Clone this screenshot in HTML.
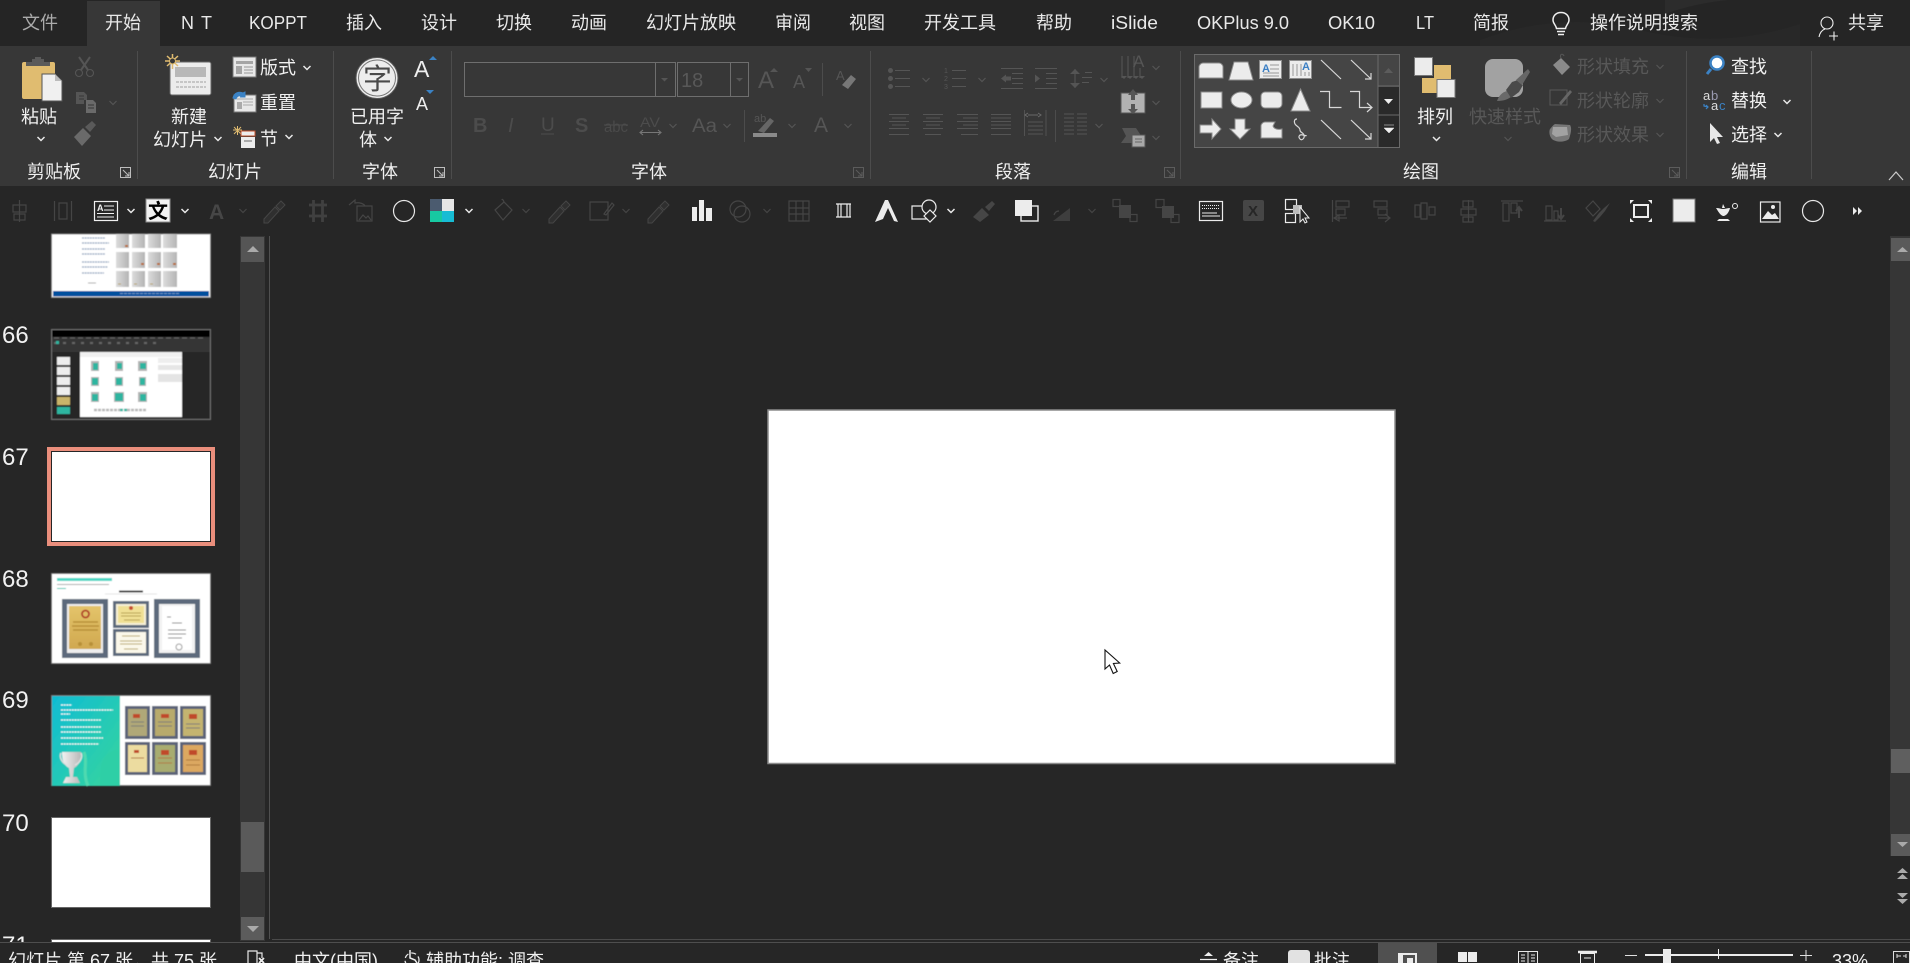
<!DOCTYPE html>
<html><head><meta charset="utf-8"><title>PowerPoint</title>
<style>
html,body{margin:0;padding:0;background:#262626;width:1910px;height:963px;overflow:hidden}
svg{display:block;position:absolute;left:0;top:0}
text{font-family:"Liberation Sans","Noto Sans CJK SC",sans-serif;font-size:18px;fill:#f0f0f0}
.t{fill:#e9e9e9}
.d{fill:#585858}
.w{fill:none;stroke:#f0f0f0;stroke-width:1.5}
.g{fill:none;stroke:#555;stroke-width:1.1}
.gf{fill:#555}
.q{fill:none;stroke:#454545;stroke-width:1.2}
.sep{stroke:#4c4c4c;stroke-width:1}
.cw{fill:none;stroke:#e8e8e8;stroke-width:1.5}
.cd{fill:none;stroke:#555;stroke-width:1.2}
.lau{fill:none;stroke:#bdbdbd;stroke-width:1}
.laud{fill:none;stroke:#5c5c5c;stroke-width:1}
.s{fill:#ececec;stroke:#8c8c8c;stroke-width:1}
.l{fill:none;stroke:#d8d8d8;stroke-width:1.2}
</style></head><body>
<svg width="1910" height="963" viewBox="0 0 1910 963" xmlns="http://www.w3.org/2000/svg">
<defs>
<path id="c" d="M-3.5-2L0 1.5 3.5-2"/>
<filter id="b"><feGaussianBlur stdDeviation="0.5"/></filter>
<linearGradient id="tg" x1="0" y1="0" x2="1" y2="1"><stop offset="0" stop-color="#0fbcd4"/><stop offset="1" stop-color="#38d69c"/></linearGradient>
<linearGradient id="cg" x1="0" y1="0" x2="1" y2="0"><stop offset="0" stop-color="#dcdcdc"/><stop offset="1" stop-color="#b4b4b4"/></linearGradient>
<linearGradient id="gd" x1="0" y1="0" x2="0" y2="1"><stop offset="0" stop-color="#e4c46a"/><stop offset="1" stop-color="#d0a850"/></linearGradient>
<linearGradient id="tr" x1="0" y1="0" x2="1" y2="0"><stop offset="0" stop-color="#f2f2f2"/><stop offset="1" stop-color="#b8b8b8"/></linearGradient>
</defs>

<!-- backgrounds -->
<rect width="1910" height="963" fill="#262626"/>
<rect width="1910" height="46" fill="#252525"/>
<path d="M1665 14Q1720-6 1790 0L1665 0Z" fill="#2c2c2c"/>
<path d="M1480 40Q1560 10 1640 30T1800 24L1800 46 1480 46Z" fill="#282828"/>
<rect y="46" width="1910" height="140" fill="#373737"/>
<rect x="87" y="1" width="73" height="45" fill="#373737"/>

<!-- tabs -->
<text x="22" y="29" style="fill:#ababab">文件</text>
<text x="105" y="29" class="t">开始</text>
<text x="181" y="29" class="t" textLength="31" lengthAdjust="spacing">N T</text>
<text x="249" y="29" class="t" textLength="58" lengthAdjust="spacingAndGlyphs">KOPPT</text>
<text x="346" y="29" class="t">插入</text>
<text x="421" y="29" class="t">设计</text>
<text x="496" y="29" class="t">切换</text>
<text x="571" y="29" class="t">动画</text>
<text x="646" y="29" class="t">幻灯片放映</text>
<text x="775" y="29" class="t">审阅</text>
<text x="849" y="29" class="t">视图</text>
<text x="924" y="29" class="t">开发工具</text>
<text x="1036" y="29" class="t">帮助</text>
<text x="1111" y="29" class="t" textLength="47" lengthAdjust="spacingAndGlyphs">iSlide</text>
<text x="1197" y="29" class="t" textLength="92" lengthAdjust="spacingAndGlyphs">OKPlus 9.0</text>
<text x="1328" y="29" class="t" textLength="47" lengthAdjust="spacingAndGlyphs">OK10</text>
<text x="1416" y="29" class="t" textLength="18" lengthAdjust="spacingAndGlyphs">LT</text>
<text x="1473" y="29" class="t">简报</text>
<path d="M1561 13c-5.500 0-8 3.900-8 7.500 0 3.500 3 5 3.500 8.500h9c.5-3.500 3.500-5 3.500-8.500 0-3.600-2.500-7.500-8-7.500z M1557 32h8 M1558 35h6" class="w" transform="translate(0 -0.500)"/>
<text x="1590" y="29" class="t">操作说明搜索</text>
<circle cx="1827" cy="23" r="6" class="w" style="stroke-width:1.100"/>
<path d="M1819 37c1-5 3-7 6-8M1829 36h9M1834 31.500v9" class="w" style="stroke-width:1.100"/>
<text x="1848" y="29" class="t">共享</text>

<!-- ribbon separators -->
<g class="sep">
<path d="M137.500 51V179M333.500 51V179M451.500 51V179M870.500 51V179M1180.500 51V179M1686.500 51V179M1811.500 51V179"/>
<path d="M822.500 63V96M744.500 110V142M1055.500 110V142"/>
</g>

<!-- clipboard -->
<rect x="22" y="62" width="33" height="37" rx="2" fill="#e0bc70"/>
<path d="M32 62v-3h3v-2h6v2h3v3h6v4H26v-4z" fill="#5a5a5a"/>
<path d="M42 74h13l7 7v20H42z" fill="#f0f0f0" stroke="#555"/>
<path d="M55 74v7h7" fill="#bbb"/>
<text x="21" y="123">粘贴</text>
<use href="#c" x="41" y="139" class="cw"/>
<g class="g"><circle cx="79" cy="73" r="3.500"/><circle cx="90" cy="73" r="3.500"/><path d="M81 70L90 57M88 70L79 57" style="stroke-width:2"/></g>
<path d="M76 92h8l3 3v5h-3v4h-8z" class="gf"/><path d="M86 100h7l3 3v10H86z" fill="#6a6a6a"/>
<path d="M79 96h5M79 99h5M88 105h6M88 108h6" stroke="#373737"/>
<use href="#c" x="113" y="103" class="cd"/>
<path d="M74 137l9-9 8 8-9 10z" fill="#6a6a6a"/><path d="M85 127l7-6 4 4-6 7z" fill="#5a5a5a"/>
<text x="27" y="178">剪贴板</text>
<path d="M120.500 177.500v-10h10v10zM123 170l6 6M129 172v4h-4" class="lau"/>

<!-- slides group -->
<rect x="170" y="62" width="41" height="33" rx="2" fill="#ececec" stroke="#666"/>
<rect x="175" y="67" width="31" height="10" fill="#b8b8b8"/>
<path d="M176 82h30M176 87h30" stroke="#a0a0a0" stroke-dasharray="3 1"/>
<g stroke="#e0bc70" stroke-width="1.500"><path d="M165 61h15M172.500 54v15M167 56l11 10M178 56l-11 10"/></g>
<circle cx="172.500" cy="61" r="3" fill="#373737" stroke="#e0bc70"/>
<text x="171" y="123">新建</text>
<text x="153" y="146">幻灯片</text>
<use href="#c" x="218" y="139" class="cw"/>
<rect x="233" y="57" width="23" height="20" fill="#e8e8e8" stroke="#777"/>
<path d="M236 61h17v3h-17zM236 66h6v8h-6z" fill="#a5a5a5"/><path d="M244 67h9M244 70h9M244 73h9" stroke="#999"/>
<text x="260" y="74">版式</text>
<use href="#c" x="307" y="68" class="cw"/>
<rect x="234" y="95" width="22" height="17" fill="#e8e8e8" stroke="#777"/>
<path d="M237 99h16M243 102h10M243 105h10" stroke="#aaa"/><rect x="237" y="102" width="5" height="7" fill="#aaa"/>
<path d="M233 98c1-5 6-7 10-5l2-1 0 5-5 0 2-1c-3-1-5 0-6 3z" fill="#3b82c4" stroke="#3b82c4"/>
<text x="260" y="109">重置</text>
<g stroke="#e0bc70" stroke-width="1"><path d="M233 130h9M237.500 126v9M234 127l7 7M241 127l-7 7"/></g>
<rect x="241" y="131" width="14" height="5" fill="#ececec" stroke="#c2502c"/>
<rect x="241" y="137" width="14" height="11" fill="#ececec"/><rect x="244" y="140" width="8" height="2" fill="#aaa"/>
<text x="260" y="145">节</text>
<use href="#c" x="289" y="137" class="cw"/>
<text x="208" y="178">幻灯片</text>

<!-- font used -->
<ellipse cx="377" cy="78" rx="21" ry="20.500" fill="#ededed" stroke="#5a5a5a"/>
<ellipse cx="377" cy="78" rx="18.500" ry="18" fill="none" stroke="#777"/>
<text x="363" y="89" style="font-size:29px;fill:#4a4a4a">字</text>
<text x="350" y="123">已用字</text>
<text x="359" y="146">体</text>
<use href="#c" x="388" y="139" class="cw"/>
<text x="414" y="77" style="font-size:23px;fill:#eee">A</text>
<path d="M429 60l4-4 4 4z" fill="#3b82c4"/>
<text x="416" y="110" style="font-size:18px;fill:#eee">A</text>
<path d="M426 90h8l-4 4z" fill="#3b82c4"/>
<text x="362" y="178">字体</text>
<path d="M434.500 177.500v-10h10v10zM437 170l6 6M443 172v4h-4" class="lau"/>

<!-- font boxes -->
<g fill="none" stroke="#6e6e6e">
<rect x="464.500" y="62.500" width="211" height="34"/><path d="M655.500 62V97"/>
<rect x="677.500" y="62.500" width="71" height="34"/><path d="M730.500 62V97"/>
</g>
<text x="681" y="87" class="d" style="font-size:20px">18</text>
<path d="M661 78h7l-3.500 3.500zM736 78h7l-3.500 3.500z" class="gf"/>
<text x="758" y="88" style="font-size:24px;fill:#565656">A</text>
<path d="M770 72l4-4 4 4z" class="gf"/>
<text x="793" y="88" style="font-size:18px;fill:#565656">A</text>
<path d="M805 68h7l-3.500 4z" class="gf"/>
<text x="836" y="80" style="font-size:13px;fill:#565656">A</text>
<path d="M842 85l9-10 5 4-8 10z" fill="#777"/>
<!-- row 2 -->
<text x="473" y="132" style="font-size:20px;font-weight:bold;fill:#4c4c4c">B</text>
<text x="508" y="132" style="font-size:20px;font-style:italic;fill:#4c4c4c">I</text>
<text x="541" y="131" style="font-size:19px;fill:#4c4c4c">U</text>
<text x="575" y="132" style="font-size:20px;font-weight:bold;fill:#4c4c4c">S</text>
<text x="604" y="132" style="font-size:16px;fill:#4a4a4a" textLength="24" lengthAdjust="spacingAndGlyphs">abc</text>
<text x="640" y="127" style="font-size:14px;fill:#4c4c4c" textLength="20" lengthAdjust="spacingAndGlyphs">AV</text>
<text x="692" y="132" style="font-size:19px;fill:#565656" textLength="25" lengthAdjust="spacingAndGlyphs">Aa</text>
<text x="814" y="132" style="font-size:21px;fill:#565656">A</text>
<path d="M541 134h13M604 125h24" stroke="#4c4c4c"/>
<path d="M641 132.500h19M643 130l-3 2.500 3 2.500M658 130l3 2.500-3 2.500" class="g" style="stroke:#777"/>
<use href="#c" x="673" y="126" class="cd"/><use href="#c" x="727" y="126" class="cd"/>
<text x="754" y="122" style="font-size:11px;fill:#565656">ab</text>
<path d="M758 131l12-13 4 3-10 12z" fill="#666"/>
<rect x="753" y="133" width="24" height="4" fill="#8a8a8a"/>
<use href="#c" x="792" y="126" class="cd"/><use href="#c" x="848" y="126" class="cd"/>
<text x="631" y="178">字体</text>
<path d="M853.500 177.500v-10h10v10zM856 170l6 6M862 172v4h-4" class="laud"/>

<!-- paragraph -->
<g class="g">
<path d="M895 70.500h15M895 78.500h15M895 86.500h15"/>
<path d="M952 70.500h14M952 78.500h14M952 86.500h14"/>
<path d="M1001 68.500h22M1012 73.500h11M1012 78.500h11M1012 83.500h11M1001 88.500h22"/>
<path d="M1035 68.500h22M1046 73.500h11M1046 78.500h11M1046 83.500h11M1035 88.500h22"/>
<path d="M1085 72.500h7M1082 77.500h10M1082 82.500h7M1075 69v19"/>
<path d="M1122 56v22M1128 56v22M1134 56v22M1140 68v10"/>
<path d="M889 114.500h20M889 121.500h20M889 128.500h20M892 118h14M892 125h14M889 134.500h20" stroke-width=".9"/>
<path d="M923 114.500h20M923 121.500h20M923 128.500h20M926 118h14M926 125h14M925 134.500h16" stroke-width=".9"/>
<path d="M957 114.500h21M957 121.500h21M957 128.500h21M963 118h15M963 125h15M961 134.500h17" stroke-width=".9"/>
<path d="M991 114.500h20M991 118h20M991 121.500h20M991 125h20M991 128.500h20M991 134.500h20" stroke-width=".9"/>
<path d="M1024.500 110v26M1046 110v26M1028 122h15M1028 126h15M1028 130h15M1028 134h15" stroke-width=".9"/>
<path d="M1064 114h10M1064 118h10M1064 122h10M1064 126h10M1064 130h10M1064 134h10M1077 114h10M1077 118h10M1077 122h10M1077 126h10M1077 130h10M1077 134h10" stroke-width=".9"/>
</g>
<g class="gf"><circle cx="890.500" cy="70.500" r="2.500"/><circle cx="890.500" cy="78.500" r="2.500"/><circle cx="890.500" cy="86.500" r="2.500"/>
<path d="M1001 78.500l5-4v8zM1006 76.500h5v4h-5zM1035 74.500l5 4-5 4zM1070 74l5-5 5 5zM1070 83l5 5 5-5z"/><path d="M1121 76l3 3 3-3zM1127 76l3 3 3-3zM1133 76l3 3 3-3zM1139 76l3 3 3-3z"/></g>
<text x="944" y="73" style="font-size:7px;fill:#565656">1</text><text x="944" y="81" style="font-size:7px;fill:#565656">2</text><text x="944" y="89" style="font-size:7px;fill:#565656">3</text>
<text x="1133" y="67" style="font-size:17px;fill:#565656">A</text>
<path d="M1028 115h10M1028 113l-3 2 3 2M1038 113l3 2-3 2" stroke="#6a6a6a" fill="none"/>
<rect x="1121" y="93" width="24" height="20" fill="#b2b2b2" stroke="#555"/>
<path d="M1133 89l-5 6h3v5h4v-5h3zM1133 114l-5-5h3v-5h4v5h3z" fill="#555"/>
<path d="M1122 128h14l6 9-5 6h-16l5-7z" fill="#555"/>
<rect x="1132" y="135" width="13" height="12" fill="#a8a8a8" stroke="#555"/><path d="M1135 139h7M1135 142h7" stroke="#666"/>
<use href="#c" x="926" y="80" class="cd"/><use href="#c" x="982" y="80" class="cd"/><use href="#c" x="1104" y="80" class="cd"/>
<use href="#c" x="1156" y="68" class="cd"/><use href="#c" x="1156" y="103" class="cd"/><use href="#c" x="1156" y="138" class="cd"/>
<use href="#c" x="1099" y="126" class="cd"/>
<text x="995" y="178">段落</text>
<path d="M1164.500 177.500v-10h10v10zM1167 170l6 6M1173 172v4h-4" class="laud"/>

<!-- gallery -->
<rect x="1194.500" y="54.500" width="205" height="93" fill="#454545" stroke="#6a6a6a"/>
<rect x="1378" y="87" width="21" height="60" fill="#2a2a2a"/>
<path d="M1378 54v93M1378 86h21M1378 115h21" stroke="#6a6a6a" fill="none"/>
<path d="M1384 73l4.500-5 4.500 5z" fill="#5c5c5c"/>
<path d="M1384 99h9l-4.500 5z" fill="#eee"/>
<path d="M1384 125h10M1384 128h10l-5 5z" fill="#eee" stroke="#eee" stroke-width=".5"/>
<path d="M1199 78V67c0-2 2-4 4-4h16c2 0 4 2 4 4v11z" class="s"/>
<path d="M1234 62h14l5 18h-24z" class="s"/>
<rect x="1259.500" y="60.500" width="22" height="18" class="s"/><path d="M1270 65h9M1270 69h9M1263 73h16M1263 76h16" stroke="#999"/>
<text x="1262" y="72" style="font-size:11px;font-weight:bold;fill:#3b7fc4">A</text>
<rect x="1289.500" y="60.500" width="22" height="18" class="s"/><path d="M1293 64v12M1297 64v12M1301 64v12M1305 72v4M1309 72v4" stroke="#999"/>
<text x="1302" y="70" style="font-size:11px;font-weight:bold;fill:#3b7fc4">A</text>
<path d="M1321 60l20 19" class="l"/><path d="M1351 60l20 19M1371 73v6h-6" class="l"/>
<rect x="1201" y="92" width="21" height="16" class="s"/>
<ellipse cx="1241.500" cy="100" rx="10.500" ry="8" class="s"/>
<rect x="1261" y="92" width="21" height="16" rx="4" class="s"/>
<path d="M1300.500 89l9.500 22h-19z" class="s"/>
<path d="M1320 91.500h9.500v16h12" class="l"/><path d="M1350 91.500h9.500v16h12M1367 103l5 4.500-5 4.500" class="l"/>
<path d="M1200 125h12v-6l9 10-9 10v-6h-12z" class="s"/>
<path d="M1235 119h10v10h5l-10 10-10-10h5z" class="s"/>
<path d="M1261 126c0-2 2-4 4-4h10l-2 4c1 3 5 4 9 3v9h-21z" class="s"/>
<path d="M1297 119c-3 0-3 3-2 5s5 3 5 6 3 2 4 5-2 6-4 4-1-5 3-4 3 1 3 0" class="l"/>
<path d="M1321 120l20 19" class="l"/><path d="M1351 120l20 19M1371 133v6h-6" class="l"/>

<!-- arrange -->
<rect x="1414.500" y="57.500" width="18" height="18" fill="#ececec" stroke="#777"/>
<rect x="1434" y="65" width="17" height="15" fill="#e0bc70"/>
<rect x="1422" y="78" width="15" height="15" fill="#e0bc70"/>
<rect x="1437" y="79.500" width="18" height="18" fill="#ececec" stroke="#777"/>
<text x="1417" y="123">排列</text>
<use href="#c" x="1436.500" y="139" class="cw"/>
<rect x="1485" y="59" width="38" height="38" rx="8" fill="#a2a2a2"/>
<path d="M1497 101c2-6 6-9 10-10l5 5c-3 3-8 5-15 5z" fill="#6a6a6a"/>
<path d="M1506 90l6-8 6-2 5 5-4 7-8 6z" fill="#4a4a4a"/><path d="M1516 80l12-11 2 3-8 13z" fill="#666"/>
<text x="1469" y="123" class="d">快速样式</text>
<use href="#c" x="1508" y="139" class="cd"/>
<path d="M1553 65l8-7 9 9-8 8z" fill="#8a8a8a"/><path d="M1561 58c-2-4 2-5 3-2" class="g"/>
<text x="1577" y="73" class="d">形状填充</text><use href="#c" x="1660" y="67" class="cd"/>
<rect x="1550" y="90" width="17" height="15" fill="none" stroke="#5a5a5a"/><path d="M1559 103l11-13 2 2-11 13z" fill="#666"/>
<text x="1577" y="107" class="d">形状轮廓</text><use href="#c" x="1660" y="101" class="cd"/>
<path d="M1550 129c2-2 3-4 5-5l15 1c2 3 1 8-1 14-5 4-14 3-17 0-3-3-3-8-2-10z" fill="#777"/><path d="M1553 127h14l1 8-12 2-4-3z" fill="#a2a2a2"/>
<text x="1577" y="141" class="d">形状效果</text><use href="#c" x="1660" y="135" class="cd"/>
<text x="1403" y="178">绘图</text>
<path d="M1669.500 177.500v-10h10v10zM1672 170l6 6M1678 172v4h-4" class="laud"/>

<!-- edit -->
<circle cx="1717" cy="63" r="6.500" fill="#fff" stroke="#3b82c4" stroke-width="2.500"/>
<path d="M1711 69l-4 5" stroke="#3b82c4" stroke-width="3"/>
<text x="1731" y="73">查找</text>
<text x="1703" y="100" style="font-size:13px;fill:#ddd">a</text>
<text x="1711" y="100" style="font-size:13px;fill:#9a9ab0">b</text>
<text x="1711" y="110" style="font-size:13px;fill:#ddd">a</text>
<text x="1719" y="110" style="font-size:13px;fill:#3b82c4">c</text>
<path d="M1704 104v2l4 1M1706 105l2 2-2 2" fill="none" stroke="#3b82c4" stroke-width="1.200"/>
<text x="1731" y="107">替换</text>
<use href="#c" x="1787" y="102" class="cw"/>
<path d="M1710 123v19l4-4 3 6 3-1-3-6h6z" fill="#e8e8e8"/>
<text x="1731" y="141">选择</text>
<use href="#c" x="1778" y="135" class="cw"/>
<text x="1731" y="178">编辑</text>
<path d="M1889 180l7-8 7 8" class="l" style="stroke:#ccc"/>

<!-- QAT -->
<g class="q">
<path d="M19.500 200v22M13 205h13v7H13zM14 214h11v6H14z"/>
<path d="M54.500 201v20M71.500 201v20M59 203h8v16h-8z"/>
<path d="M309 205h18M309 216h18M313.500 200v22M322.500 200v22" style="stroke-width:2.800;stroke:#404040"/>
<path d="M349 205l6-5v3c5-1 9 1 10 3M357 206h15v15h-15z"/>
<path d="M359 220l4-5 3 3 2-2 3 4"/>
<path d="M495 210l9-8 8 8-9 10z M504 202c-1-3-2-3-2-2"/>
<path d="M590 202h18v18h-18z"/>
<path d="M604 214l8-11 2 2-8 10z"/>
<circle cx="738" cy="209" r="8"/><circle cx="742" cy="214" r="8"/>
<path d="M789 201h20v20h-20zM789 208h20M789 214h20M796 201v20M803 201v20"/>
<path d="M1054 215c1-3 3-4 5-4"/>
<rect x="1113" y="199.500" width="7" height="7"/><rect x="1130" y="214.500" width="7" height="7"/>
<rect x="1156" y="199.500" width="8" height="8"/><rect x="1171" y="214.500" width="8" height="8"/>
<path d="M1332.500 200v22M1336 201h13v6h-13zM1336 209h9v6h-9zM1334 218l5-3v6zM1334 218h13"/>
<path d="M1374 201h13v6h-13zM1378 209h9v6h-9zM1378 218h12M1385 214l5 4-5 4"/>
<path d="M1415 205h5v12h-5zM1421 203h6v16h-6zM1429 207h6v8h-6z"/>
<path d="M1468.500 200v22M1463 201h10v6h-10zM1461 209h15v6h-15zM1463 217h10v5h-10z"/>
<path d="M1501 201h22M1503 203h6v18h-6zM1511 203h6v10h-6z"/>
<path d="M1544 221h22M1546 206h6v14h-6zM1554 211h4v9h-4z"/>
<path d="M1586 208l7-7 7 8-7 7z"/>
</g>
<path d="M1053 221l17-13v13z" fill="#3e3e3e"/>
<path d="M1519 208v10M1516 211l3-4 3 4" class="q" style="stroke-width:2"/>
<path d="M1561 208v10M1558 215l3 4 3-4" class="q" style="stroke-width:2"/>
<path d="M1593 221l6-8 5-5 6-5-5 8-5 6-5 5z" fill="#454545"/>
<rect x="94.500" y="201.500" width="23" height="19" fill="none" stroke="#f0f0f0" stroke-width="1.200"/>
<text x="97" y="211" style="font-size:9px;font-weight:bold;fill:#f0f0f0">A</text>
<path d="M104 206h10M104 210h10M97 213.500h17M97 217h17" stroke="#f0f0f0"/>
<use href="#c" x="131" y="211" class="cw"/>
<rect x="146" y="199" width="24" height="23" fill="#f2f2f2" stroke="#8e8e8e"/>
<text x="148" y="218" style="font-size:20px;font-weight:bold;fill:#000;font-family:'Noto Sans CJK SC',sans-serif">文</text>
<use href="#c" x="185" y="211" class="cw"/>
<text x="209" y="219" style="font-size:21px;font-weight:bold;fill:#464646">A</text>
<use href="#c" x="243" y="211" class="q" />
<path d="M264 219l11-12 4 4-11 12-4 0z M276 206l5-5 4 4-5 5z" fill="#2f2f2f" stroke="#454545"/>
<path d="M549 219l11-12 4 4-11 12-4 0z M561 206l5-5 4 4-5 5z" fill="#2f2f2f" stroke="#454545"/>
<path d="M648 219l11-12 4 4-11 12-4 0z M660 206l5-5 4 4-5 5z" fill="#2f2f2f" stroke="#454545"/>
<ellipse cx="404" cy="211" rx="10.500" ry="10.500" fill="none" stroke="#e8e8e8" stroke-width="1.200"/>
<rect x="430" y="199" width="12" height="12" fill="#4b5b6f"/><rect x="442" y="199" width="12" height="12" fill="#e6e6e6"/><rect x="430" y="211" width="12" height="11" fill="#17c9a2"/><rect x="442" y="211" width="12" height="11" fill="#17bcd4"/>
<use href="#c" x="469" y="211" class="cw"/>
<use href="#c" x="526" y="211" class="q"/><use href="#c" x="626" y="211" class="q"/>
<use href="#c" x="767" y="211" class="q"/><use href="#c" x="1092" y="211" class="q"/>
<path d="M692 207h5v14h-5zM699 200h5v21h-5zM706 208h6v13h-6z" fill="#ececec"/>
<path d="M836 204h15M836 217h15M838 204v13M850 204v13M841 204v13M847 204v13" fill="none" stroke="#ececec" stroke-width="1.200"/>
<path d="M875 222l10-22h3l10 22-4-1-6-13-5 11z" fill="#ececec"/>
<path d="M912 206h14v13h-14z" fill="none" stroke="#ececec" stroke-width="1.200"/><circle cx="929" cy="207" r="7" fill="#262626" stroke="#ececec" stroke-width="1.200"/><path d="M924 216l6-6 6 6-6 6z" fill="#262626" stroke="#ececec" stroke-width="1.200"/>
<use href="#c" x="951" y="211" class="cw"/>
<path d="M973 217l9-9 7 7-9 7zM985 207l7-6 3 3-6 7z" fill="#464646"/>
<rect x="1021" y="206" width="17" height="15" fill="#262626" stroke="#ececec" stroke-width="1.400"/>
<rect x="1015" y="200" width="17" height="16" fill="#ececec"/>
<rect x="1119" y="205" width="12" height="13" fill="#454545"/>
<rect x="1162" y="206" width="12" height="12" fill="#454545"/>
<rect x="1199.500" y="201.500" width="23" height="19" fill="none" stroke="#ececec" stroke-width="1.200"/>
<path d="M1202 205.500h18" stroke="#ececec" stroke-dasharray="1 1"/><path d="M1202 208.500h18" stroke="#ececec" stroke-dasharray="1 1"/><path d="M1202 213h15M1202 216h18" stroke="#ececec"/>
<rect x="1243" y="200" width="21" height="21" rx="2" fill="#464646"/><text x="1248" y="216" style="font-size:15px;font-weight:bold;fill:#262626">X</text>
<rect x="1285.500" y="199.500" width="11" height="10" fill="none" stroke="#ececec" stroke-width="1.200"/>
<rect x="1285.500" y="213.500" width="10" height="9" fill="none" stroke="#ececec" stroke-width="1.200"/>
<rect x="1293" y="205" width="9" height="9" fill="#bbb"/>
<path d="M1300 207v15l3-3 2 4 2-1-2-4h4z" fill="#262626" stroke="#ececec"/>
<rect x="1634" y="205" width="14" height="12" fill="none" stroke="#ececec" stroke-width="2"/>
<path d="M1630 200h4l-4 4zM1652 200h-4l4 4zM1630 222h4l-4-4zM1652 222h-4l4-4z" fill="#ececec"/>
<rect x="1673" y="199" width="22" height="23" fill="#ececec" stroke="#777"/>
<path d="M1716 208c3 0 5 1 7 1s5-1 7-1c-1 4-3 7-6 8h-1c-3-1-5-5-7-8zM1719 219h9l2 2h-13zM1722 208l1-4 2 4z" fill="#ececec"/><circle cx="1735" cy="206" r="2.500" fill="none" stroke="#ececec"/>
<rect x="1760.500" y="202" width="19.500" height="20" fill="none" stroke="#ececec" stroke-width="1.200"/>
<path d="M1762 219l6-8 4 4 3-2 4 6z" fill="#ececec"/><circle cx="1773" cy="207" r="2" fill="#ececec"/>
<ellipse cx="1813" cy="211" rx="10.500" ry="10.500" fill="none" stroke="#e8e8e8" stroke-width="1.200"/>
<path d="M1853 207l4 4-4 4zM1858 207l4 4-4 4z" fill="#ececec"/>

<!-- left scrollbar -->
<rect x="240" y="236" width="25" height="705" fill="#363636"/>
<rect x="241" y="237" width="23" height="25" fill="#555"/>
<path d="M247 252l6-6 6 6z" fill="#aaa"/>
<rect x="241" y="822" width="23" height="50" fill="#5a5a5a"/>
<rect x="241" y="917" width="23" height="23" fill="#5c5c5c"/>
<path d="M247 926h12l-6 6z" fill="#aaa"/>
<path d="M269.500 236V939" stroke="#505050"/>
<path d="M272 939.500H1910" stroke="#4a4a4a"/>

<!-- right scrollbar -->
<rect x="1890" y="236" width="20" height="620" fill="#363636"/>
<rect x="1891" y="238" width="19" height="23" fill="#5a5a5a"/>
<path d="M1897 252l5.500-5 5.500 5z" fill="#aaa"/>
<rect x="1891" y="749" width="19" height="24" fill="#5f5f5f"/>
<rect x="1891" y="834" width="19" height="22" fill="#5a5a5a"/>
<path d="M1897 842h11l-5.500 5z" fill="#aaa"/>
<path d="M1897 873l5.500-5 5.500 5zM1897 879l5.500-5 5.500 5zM1897 893h11l-5.500 5zM1897 899h11l-5.500 5z" fill="#aaa"/>

<!-- slide -->
<rect x="768" y="410" width="627" height="353.500" fill="#fff" stroke="#8c8c8c" stroke-width="1.500"/>
<path d="M1105 650v19l4.500-4 3.700 8.500 4-2-3.800-8 6.300-.5z" fill="#fff" stroke="#111" stroke-width="1.100"/>

<!-- numbers -->
<text x="2" y="343" style="font-size:24px;fill:#f2f2f2">66</text>
<text x="2" y="465" style="font-size:24px;fill:#f2f2f2">67</text>
<text x="2" y="587" style="font-size:24px;fill:#f2f2f2">68</text>
<text x="2" y="708" style="font-size:24px;fill:#f2f2f2">69</text>
<text x="2" y="831" style="font-size:24px;fill:#f2f2f2">70</text>
<text x="2" y="953" style="font-size:24px;fill:#f2f2f2">71</text>

<!-- thumb 65 -->
<g filter="url(#b)">
<rect x="51.500" y="234" width="159" height="63.500" fill="#fff" stroke="#888"/>
<rect x="53" y="291" width="156" height="5.500" fill="#014f9e"/>
<path d="M82 238h23M82 243h27M82 249h23M82 254h23M82 262h27M82 267h26M82 273h22" stroke="#8ba0bc" stroke-width="1.300" stroke-dasharray="2 .6"/>
<path d="M88 283h8" stroke="#aaa"/>
<g fill="url(#cg)">
<rect x="116" y="234" width="13" height="14"/><rect x="132" y="234" width="13" height="14"/><rect x="148" y="234" width="13" height="14"/><rect x="163" y="234" width="14" height="14"/>
<rect x="116" y="252" width="13" height="16"/><rect x="132" y="252" width="13" height="16"/><rect x="148" y="252" width="13" height="16"/><rect x="163" y="252" width="14" height="16"/>
<rect x="116" y="271" width="13" height="16"/><rect x="132" y="271" width="13" height="16"/><rect x="148" y="271" width="13" height="16"/><rect x="163" y="271" width="14" height="16"/>
</g>
<path d="M125 245h3v2h-3zM141 263h3v2h-3zM157 263h3v2h-3zM173 263h3v2h-3z" fill="#b86a30"/>
<path d="M118 284h3M134 284h3M150 284h3" stroke="#b8a060"/>
<path d="M120 293.500h60" stroke="#6a94c4" stroke-dasharray="3 1"/>
</g>

<!-- thumb 66 -->
<g filter="url(#b)">
<rect x="51.500" y="329.500" width="159" height="90" fill="#262626" stroke="#777"/>
<rect x="52" y="330" width="158" height="7" fill="#000"/>
<rect x="52" y="337" width="158" height="15" fill="#343434"/>
<path d="M54 338h150" stroke="#666" stroke-dasharray="5 3"/>
<path d="M54 343h105" stroke="#666" stroke-width="2" stroke-dasharray="3 6"/>
<path d="M56 341h3v3h-3z" fill="#2fb5a0"/>
<rect x="57" y="357" width="13" height="8" fill="#eee"/><rect x="57" y="367" width="13" height="8" fill="#eee"/><rect x="57" y="377" width="13" height="8" fill="#eee"/><rect x="57" y="387" width="13" height="8" fill="#eee"/>
<rect x="57" y="397" width="13" height="8" fill="#c9b46a"/><rect x="57" y="407" width="13" height="7" fill="#2fb5a0"/>
<rect x="80" y="352" width="102" height="65" fill="#fff"/>
<rect x="80" y="352" width="102" height="5" fill="#f0f0f0"/>
<rect x="158" y="358" width="24" height="5" fill="#eee"/><rect x="158" y="365" width="24" height="5" fill="#e6e6e6"/><rect x="158" y="374" width="24" height="8" fill="#e4e4e4"/>
<g fill="#b4b4b4"><rect x="91" y="361" width="8" height="10"/><rect x="115" y="361" width="8" height="10"/><rect x="138" y="361" width="9" height="10"/><rect x="91" y="377" width="8" height="9"/><rect x="115" y="377" width="8" height="9"/><rect x="139" y="377" width="7" height="9"/><rect x="91" y="392" width="8" height="10"/><rect x="114" y="392" width="10" height="10"/><rect x="138" y="392" width="9" height="10"/></g>
<g fill="#2fb5a0"><rect x="93" y="363" width="5" height="7"/><rect x="117" y="363" width="5" height="6"/><rect x="140" y="363" width="6" height="6"/><rect x="92" y="378" width="6" height="7"/><rect x="116" y="378" width="6" height="7"/><rect x="140" y="378" width="5" height="7"/><rect x="92" y="394" width="6" height="7"/><rect x="115" y="393" width="8" height="8"/><rect x="140" y="394" width="6" height="7"/></g>
<path d="M94 410h26" stroke="#b8b8b8" stroke-width="2.500" stroke-dasharray="3 1"/><path d="M120 410h7" stroke="#2fb5a0" stroke-width="2.500" stroke-dasharray="3 1"/><path d="M127 410h19" stroke="#b8b8b8" stroke-width="2.500" stroke-dasharray="3 1"/>
</g>

<!-- thumb 67 selected -->
<rect x="47" y="447" width="168" height="99" fill="#ea8e7c"/>
<rect x="51" y="451" width="160" height="91" fill="#262626"/>
<rect x="52" y="452" width="158" height="89" fill="#fff"/>

<!-- thumb 68 -->
<g filter="url(#b)">
<rect x="51.500" y="573.500" width="159" height="90" fill="#fff" stroke="#777"/>
<path d="M57 579.500h55" stroke="#4cd6c4" stroke-width="3"/>
<path d="M57 584.500h52" stroke="#aaa"/>
<path d="M57 588.500h9" stroke="#16c8b0"/>
<path d="M119 591.500h24" stroke="#333" stroke-width="2"/>
<path d="M105 594h52" stroke="#e4e4e4"/>
<rect x="62" y="599" width="46" height="59" fill="#5d6a7c"/><rect x="67" y="604" width="36" height="49" fill="#eee"/>
<rect x="69" y="606" width="32" height="43" fill="url(#gd)"/><circle cx="85.500" cy="614" r="3.500" fill="none" stroke="#b03c28" stroke-width="1.800"/>
<path d="M73 622h25M72 626h27M73 630h25" stroke="#b89038" stroke-width="1.600"/>
<circle cx="80" cy="644" r="2" fill="#b89038"/><circle cx="91" cy="644" r="2" fill="#b89038"/>
<rect x="113" y="601" width="36" height="27" fill="#5d6a7c"/><rect x="116" y="604" width="30" height="21" fill="#f5f0d8"/><rect x="118" y="606" width="26" height="17" fill="#f0e094"/><circle cx="131" cy="608" r="2" fill="#c85030"/><path d="M121 613h20M121 616h20M124 620h16" stroke="#b8a050"/>
<rect x="113" y="629" width="36" height="27" fill="#5d6a7c"/><rect x="116" y="632" width="30" height="21" fill="#fbf8ea"/><path d="M122 636h18M120 641h22M120 644h22M124 649h14" stroke="#bba968"/>
<rect x="154" y="599" width="46" height="59" fill="#5d6a7c"/><rect x="159" y="604" width="36" height="49" fill="#f2f2f2"/><rect x="162" y="606" width="30" height="44" fill="#fff"/><path d="M167 617h4M172 623h10M168 630h18M168 634h18M168 638h14" stroke="#888"/><circle cx="179" cy="647" r="3" fill="none" stroke="#999"/>
</g>

<!-- thumb 69 -->
<g filter="url(#b)">
<rect x="51.500" y="695.500" width="159" height="90" fill="#fff" stroke="#777"/>
<rect x="52" y="696" width="68" height="90" fill="url(#tg)"/>
<path d="M100 786c0-20 0-30 15-36l5 0v36z" fill="#2fcfa6"/>
<path d="M84 752c4 10-2 20 4 34" fill="none" stroke="#4fdab0" stroke-width="3"/>
<path d="M61 705h11M61 710h52M61 714h9M61 720h40M61 727h40M61 732h40M61 738h42M61 744h38" stroke="#fff" stroke-width="1.200" stroke-dasharray="2 .7"/>
<path d="M62 752c0 10 3 14 7 16l1 9h-4l-3 6h17l-3-6h-4l1-9c4-2 7-6 7-16z" fill="url(#tr)"/>
<path d="M61 753c-2 4 1 10 6 12M81 753c2 4-1 10-6 12" fill="none" stroke="#e0e0e0" stroke-width="1.500"/>
<g fill="#5c6478">
<rect x="125" y="706" width="25" height="33"/><rect x="152" y="706" width="26" height="33"/><rect x="180" y="706" width="26" height="33"/>
<rect x="125" y="742" width="25" height="33"/><rect x="152" y="742" width="26" height="33"/><rect x="180" y="742" width="26" height="33"/>
</g>
<rect x="128" y="709" width="19" height="27" fill="#b0a878"/><rect x="155" y="709" width="20" height="27" fill="#b8aa6c"/><rect x="183" y="709" width="20" height="27" fill="#c4b470"/>
<rect x="128" y="745" width="19" height="27" fill="#ecdca0"/><rect x="155" y="745" width="20" height="27" fill="#a8ac70"/><rect x="183" y="745" width="20" height="27" fill="#dca860"/>
<path d="M133 714h7v4h-7zM161 714h8v4h-8zM189 714h8v5h-8zM134 750h5v3h-5zM161 750h8v5h-8zM189 750h8v5h-8z" fill="#c04a2a"/>
<path d="M131 722h13M131 726h13M158 722h14M158 726h14M186 724h14M186 728h14" stroke="#7a7a78"/>
<path d="M131 758h13M158 758h14M158 763h14M186 760h14M186 765h14" stroke="#b07840"/>
</g>

<!-- thumb 70 / 71 -->
<rect x="51.500" y="817.500" width="159" height="90" fill="#fff" stroke="#666"/>
<rect x="51.500" y="939.500" width="159" height="10" fill="#fff" stroke="#666"/>

<!-- status bar -->
<rect y="942" width="1910" height="21" fill="#262626"/>
<path d="M0 942.500H1910" stroke="#4e4e4e"/>
<text x="8" y="967">幻灯片 第 67 张，共 75 张</text>
<path d="M248 951h9v16h-9zM257 953l5 0v5" fill="none" stroke="#e8e8e8" stroke-width="1.200"/>
<path d="M259 958l5 5M264 958l-5 5" stroke="#eee" stroke-width="1.800"/>
<text x="294" y="967">中文(中国)</text>
<circle cx="412" cy="960" r="7" fill="none" stroke="#e8e8e8" stroke-width="1.300" stroke-dasharray="5 3"/>
<path d="M410 950v8l5 2 2 3" fill="none" stroke="#eee" stroke-width="1.500"/>
<text x="426" y="967">辅助功能: 调查</text>
<path d="M1204 956l4.500-4 4.500 4z" fill="#eee"/><path d="M1200 959.500h17" stroke="#eee" stroke-width="1.200"/>
<text x="1223" y="967">备注</text>
<rect x="1288" y="950" width="22" height="16" rx="3" fill="#e2e2e2"/>
<text x="1314" y="967">批注</text>
<rect x="1378" y="943" width="59" height="20" fill="#505050"/>
<rect x="1398" y="953" width="19" height="12" fill="#ececec"/><rect x="1403" y="955" width="12" height="10" fill="#505050"/><rect x="1407" y="958" width="6" height="5" fill="#ececec"/>
<rect x="1458" y="952" width="9" height="10" fill="#ececec"/><rect x="1468" y="952" width="9" height="10" fill="#ececec"/>
<rect x="1518.500" y="951.500" width="19" height="14" fill="none" stroke="#e8e8e8"/><path d="M1528 952v12M1521 955h4M1521 958h4M1521 961h4M1531 955h4M1531 958h4M1531 961h4" stroke="#e8e8e8"/>
<path d="M1578 952h19" stroke="#ececec" stroke-width="2.500"/><rect x="1580.500" y="953.500" width="14" height="11" fill="none" stroke="#ececec"/><path d="M1584 958h7" stroke="#ececec"/>
<path d="M1625 955.500h12M1800 955.500h12M1806 950v11" stroke="#e0e0e0"/>
<path d="M1645 955h148" stroke="#ececec" stroke-width="2"/>
<rect x="1663" y="949" width="8" height="14" fill="#ececec"/>
<path d="M1718.500 949v10" stroke="#ececec"/>
<text x="1832" y="967">33%</text>
<rect x="1893.500" y="951.500" width="16" height="14" fill="none" stroke="#ddd"/><path d="M1897 956h4M1897 954v4M1906 956h-3M1906 954v4" stroke="#ddd"/>
</svg>
</body></html>
